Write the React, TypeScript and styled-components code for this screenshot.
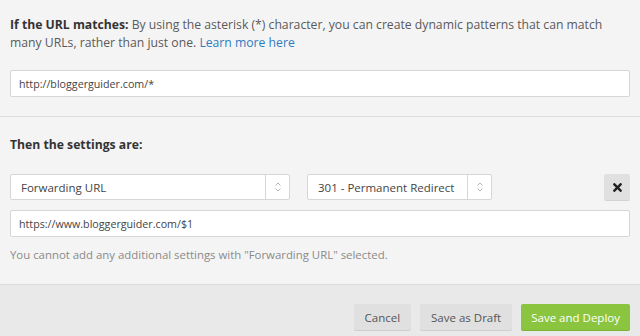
import React from "react";
import styled, {createGlobalStyle} from "styled-components";
import {FaTimes} from "react-icons/fa";

const GlobalStyle = createGlobalStyle`
  html, body {
    margin: 0;
    padding: 0;
    background: #f4f4f4;
  }
  * {
    box-sizing: border-box;
  }
`;

const Page = styled.div`
  width: 640px;
  height: 336px;
  overflow: hidden;
  background: #f4f4f4;
  font-family: "Open Sans", "Noto Sans", sans-serif;
  color: #555;
  display: flex;
  flex-direction: column;
`;

// one block of the form, top/bottom padding differs
const Section = styled.section<{$top: number; $bottom: number}>`
  padding: ${p => p.$top}px 10px ${p => p.$bottom}px;
`;

const Divider = styled.div`
  height: 1px;
  background: #dedede;
`;

const Intro = styled.p`
  margin: 0;
  font-size: 12.2px;
  line-height: 18px;
  color: #5a5a5a;
  white-space: nowrap;
`;

const Strong = styled.strong`
  font-weight: 700;
  color: #333;
`;

const Link = styled.a`
  color: #2f7bbf;
  text-decoration: none;
`;

const Heading = styled.h3`
  margin: 0;
  font-size: 12.2px;
  line-height: 18px;
  font-weight: 700;
  color: #333;
`;

const TextInput = styled.div<{$mt: number}>`
  margin-top: ${p => p.$mt}px;
  height: 27px;
  background: #fff;
  border: 1px solid #d6d6d6;
  border-radius: 2px;
  display: flex;
  align-items: center;
  padding: 0 8px;
  font-size: 10.7px;
  color: #444;
`;

const SettingsRow = styled.div`
  margin-top: 20px;
  display: flex;
  align-items: center;
  gap: 17px;
`;

const Select = styled.div<{$w: number}>`
  width: ${p => p.$w}px;
  height: 26px;
  background: #fff;
  border: 1px solid #d6d6d6;
  border-radius: 2px;
  display: flex;
  align-items: stretch;
`;

const SelectValue = styled.div`
  flex: 1;
  display: flex;
  align-items: center;
  padding-left: 10px;
  font-size: 11.5px;
  color: #444;
  white-space: nowrap;
`;

const SelectArrow = styled.div`
  width: 24px;
  border-left: 1px solid #d6d6d6;
  display: flex;
  align-items: center;
  justify-content: center;
`;

const RemoveButton = styled.button`
  margin-left: auto;
  width: 26px;
  height: 26px;
  border: none;
  border-radius: 2px;
  background: #e0e0e0;
  box-shadow: 0 1px 0 #d4d4d4;
  display: flex;
  align-items: center;
  justify-content: center;
  padding: 0;
  color: #222;
`;

const Hint = styled.p`
  margin: 9px 0 0;
  font-size: 11.4px;
  line-height: 18px;
  color: #8a8a8a;
`;

const Footer = styled.footer`
  flex: 1;
  border-top: 1px solid #dddddd;
  background: #e9e9e9;
  display: flex;
  justify-content: flex-end;
  align-items: flex-start;
  gap: 9px;
  padding: 19px 10px 0;
`;

const Button = styled.button<{$primary?: boolean}>`
  height: 26px;
  border: none;
  border-radius: 2px;
  padding: 0 ${p => (p.$primary ? 10 : 11)}px;
  font-family: "Open Sans", "Noto Sans", sans-serif;
  font-size: 11.5px;
  background: ${p => (p.$primary ? "#8bc53f" : "#e0e0e0")};
  color: ${p => (p.$primary ? "#fff" : "#555")};
  box-shadow: 0 1px 0 ${p => (p.$primary ? "#7cb334" : "#cfcfcf")};
`;

const Arrows = () => (
    <svg width="8" height="12" viewBox="0 0 8 12">
        <path d="M1.5 4.5 L4 2 L6.5 4.5" fill="none" stroke="#b5b5b5" strokeWidth="1"/>
        <path d="M1.5 7.5 L4 10 L6.5 7.5" fill="none" stroke="#b5b5b5" strokeWidth="1"/>
    </svg>
);

export default function App() {
    return (
        <Page>
            <GlobalStyle/>
            <Section $top={16} $bottom={19}>
                <Intro>
                    <Strong>If the URL matches:</Strong> By using the asterisk (*) character, you can create dynamic
                    patterns that can match<br/>many URLs, rather than just one. <Link href="#">Learn more here</Link>
                </Intro>
                <TextInput $mt={18}>http://bloggerguider.com/*</TextInput>
            </Section>
            <Divider/>
            <Section $top={19} $bottom={20}>
                <Heading>Then the settings are:</Heading>
                <SettingsRow>
                    <Select $w={280}>
                        <SelectValue>Forwarding URL</SelectValue>
                        <SelectArrow><Arrows/></SelectArrow>
                    </Select>
                    <Select $w={185}>
                        <SelectValue>301 - Permanent Redirect</SelectValue>
                        <SelectArrow><Arrows/></SelectArrow>
                    </Select>
                    <RemoveButton aria-label="remove"><FaTimes size={13}/></RemoveButton>
                </SettingsRow>
                <TextInput $mt={10}>https://www.bloggerguider.com/$1</TextInput>
                <Hint>You cannot add any additional settings with "Forwarding URL" selected.</Hint>
            </Section>
            <Footer>
                <Button>Cancel</Button>
                <Button>Save as Draft</Button>
                <Button $primary>Save and Deploy</Button>
            </Footer>
        </Page>
    );
}
